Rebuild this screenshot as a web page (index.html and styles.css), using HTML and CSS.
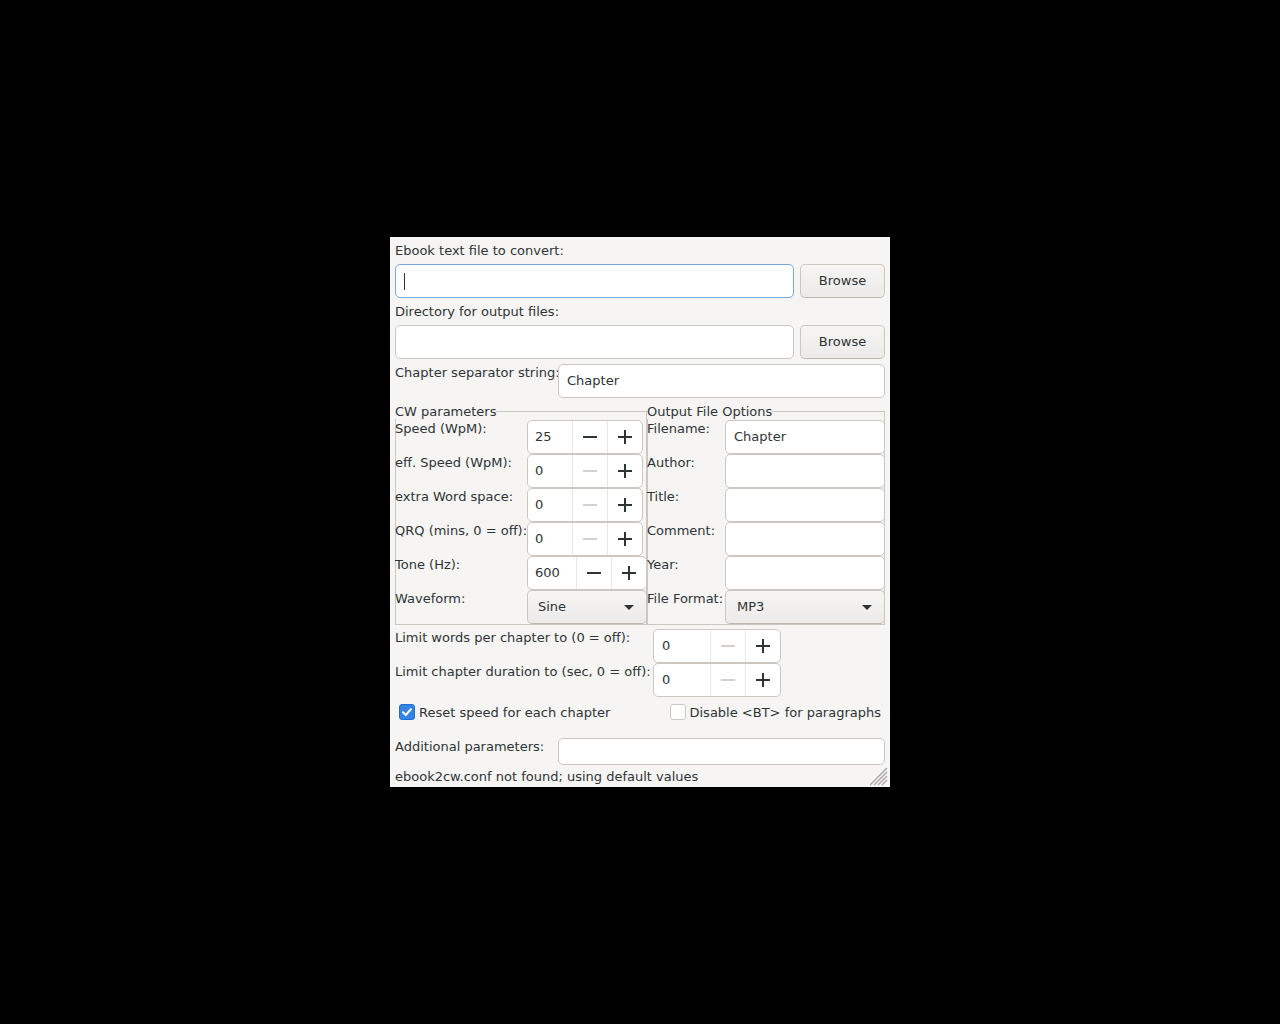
FILE: index.html
```html
<!DOCTYPE html>
<html>
<head>
<meta charset="utf-8">
<link rel="stylesheet" href="styles.css">
</head>
<body>
<div class="window">
  <div class="top-label">Ebook text file to convert:</div>
  <div class="file-row">
    <div class="entry focus"><span class="caret"></span></div>
    <div class="btn">Browse</div>
  </div>
  <div class="top-label">Directory for output files:</div>
  <div class="file-row">
    <div class="entry"></div>
    <div class="btn">Browse</div>
  </div>
  <div class="chapter-row">
    <span class="lbl">Chapter separator string:</span>
    <div class="entry">Chapter</div>
  </div>

  <div class="frames">
    <fieldset class="frame cw">
      <legend>CW parameters</legend>
      <div class="cw-grid">
        <span class="lbl in">Speed (WpM):</span>
        <div class="spin"><span class="val">25</span><span class="sb"><i class="minus"></i></span><span class="sb"><i class="plus"></i></span></div>
        <span class="lbl in">eff. Speed (WpM):</span>
        <div class="spin"><span class="val">0</span><span class="sb off"><i class="minus"></i></span><span class="sb"><i class="plus"></i></span></div>
        <span class="lbl in">extra Word space:</span>
        <div class="spin"><span class="val">0</span><span class="sb off"><i class="minus"></i></span><span class="sb"><i class="plus"></i></span></div>
        <span class="lbl in">QRQ (mins, 0 = off):</span>
        <div class="spin"><span class="val">0</span><span class="sb off"><i class="minus"></i></span><span class="sb"><i class="plus"></i></span></div>
        <span class="lbl in">Tone (Hz):</span>
        <div class="spin wide"><span class="val">600</span><span class="sb"><i class="minus"></i></span><span class="sb"><i class="plus"></i></span></div>
        <span class="lbl in">Waveform:</span>
        <div class="combo"><span>Sine</span><i class="arrow"></i></div>
      </div>
    </fieldset>
    <fieldset class="frame out">
      <legend>Output File Options</legend>
      <div class="out-grid">
        <span class="lbl in">Filename:</span>
        <div class="entry">Chapter</div>
        <span class="lbl in">Author:</span>
        <div class="entry"></div>
        <span class="lbl in">Title:</span>
        <div class="entry"></div>
        <span class="lbl in">Comment:</span>
        <div class="entry"></div>
        <span class="lbl in">Year:</span>
        <div class="entry"></div>
        <span class="lbl in">File Format:</span>
        <div class="combo fmt"><span>MP3</span><i class="arrow"></i></div>
      </div>
    </fieldset>
  </div>

  <div class="limit-grid">
    <span class="lbl">Limit words per chapter to (0 = off):</span>
    <div class="spin limit"><span class="val">0</span><span class="sb off"><i class="minus"></i></span><span class="sb"><i class="plus"></i></span></div>
    <span class="lbl">Limit chapter duration to (sec, 0 = off):</span>
    <div class="spin limit"><span class="val">0</span><span class="sb off"><i class="minus"></i></span><span class="sb"><i class="plus"></i></span></div>
  </div>

  <div class="check-row">
    <label class="check"><span class="box checked"><svg width="16" height="16" viewBox="0 0 16 16"><path d="M4 8.3 L6.8 11 L12 5.2" fill="none" stroke="#fff" stroke-width="2" stroke-linecap="round" stroke-linejoin="round"/></svg></span>Reset speed for each chapter</label>
    <label class="check"><span class="box"></span>Disable &lt;BT&gt; for paragraphs</label>
  </div>

  <div class="add-row">
    <span class="lbl">Additional parameters:</span>
    <div class="entry short"></div>
  </div>

  <div class="status">ebook2cw.conf not found; using default values</div>

  <svg class="grip" width="20" height="20" viewBox="0 0 20 20">
    <g stroke="#a7a4a1" stroke-width="1.2">
      <line x1="2" y1="19" x2="19" y2="2"/>
      <line x1="6" y1="19" x2="19" y2="6"/>
      <line x1="10" y1="19" x2="19" y2="10"/>
      <line x1="14" y1="19" x2="19" y2="14"/>
    </g>
  </svg>
</div>
</body>
</html>
```

FILE: styles.css
```css
html, body {
  margin: 0;
  padding: 0;
}
body {
  width: 1280px;
  height: 1024px;
  background: #000;
  position: relative;
  font-family: "DejaVu Sans", sans-serif;
  font-size: 13px;
  color: #2e3436;
}
.window {
  position: absolute;
  left: 390px;
  top: 237px;
  width: 500px;
  height: 550px;
  box-sizing: border-box;
  padding: 0 5px;
  background: #f6f5f4;
}
.top-label {
  height: 27px;
  line-height: 27px;
}
.lbl {
  line-height: 16px;
  padding-top: 1px;
  white-space: nowrap;
}
.lbl.in {
  margin-left: -1px;
}
.entry {
  box-sizing: border-box;
  height: 34px;
  border: 1px solid #cdc7c2;
  border-radius: 5px;
  background: #fff;
  padding: 0 8px 1px;
  display: flex;
  align-items: center;
  white-space: nowrap;
}
.entry.focus {
  border-color: #7ba7df;
  padding-bottom: 0;
}
.caret {
  width: 1px;
  height: 17px;
  background: #2e3436;
}
.file-row {
  display: grid;
  grid-template-columns: 399px 85px;
  column-gap: 6px;
}
.btn {
  box-sizing: border-box;
  height: 34px;
  padding-bottom: 1px;
  border: 1px solid #cdc7c2;
  border-bottom-color: #bfb8b1;
  border-radius: 5px;
  background: linear-gradient(#f6f5f4, #edebe9);
  display: flex;
  align-items: center;
  justify-content: center;
}
.chapter-row {
  margin-top: 5px;
  display: grid;
  grid-template-columns: 163px 327px;
}
.frames {
  margin-top: 6px;
  display: flex;
}
.frame {
  margin: 0;
  padding: 1px 0 0 0;
  border: 1px solid #cdc7c2;
  min-width: 0;
  box-sizing: border-box;
}
.frame legend {
  padding: 0;
  margin-left: -1px;
  line-height: 15px;
}
.frame.cw {
  width: 252px;
}
.frame.out {
  width: 238px;
}
.cw-grid {
  display: grid;
  grid-template-columns: 131px 120px;
  grid-auto-rows: 34px;
}
.out-grid {
  display: grid;
  grid-template-columns: 77px 160px;
  grid-auto-rows: 34px;
}
.spin {
  box-sizing: border-box;
  display: flex;
  width: 116px;
  height: 34px;
  border: 1px solid #cdc7c2;
  border-radius: 5px;
  background: #fff;
}
.spin .val {
  width: 44px;
  box-sizing: border-box;
  padding: 0 0 1px 7px;
  display: flex;
  align-items: center;
}
.spin.wide {
  width: 120px;
}
.spin.wide .val {
  width: 48px;
}
.spin.limit {
  width: 128px;
}
.spin.limit .val {
  width: 56px;
  padding-left: 8px;
}
.sb {
  box-sizing: border-box;
  width: 35px;
  border-left: 1px solid #e9e6e3;
  display: flex;
  align-items: center;
  justify-content: center;
  color: #2e3436;
}
.sb.off {
  color: #d3cfcc;
}
.minus {
  display: block;
  width: 14px;
  height: 2px;
  background: currentColor;
}
.plus {
  display: block;
  position: relative;
  width: 14px;
  height: 14px;
}
.plus::before,
.plus::after {
  content: "";
  position: absolute;
  background: currentColor;
}
.plus::before {
  left: 0;
  top: 6px;
  width: 14px;
  height: 2px;
}
.plus::after {
  left: 6px;
  top: 0;
  width: 2px;
  height: 14px;
}
.combo {
  box-sizing: border-box;
  height: 34px;
  width: 120px;
  border: 1px solid #cdc7c2;
  border-bottom-color: #bfb8b1;
  border-radius: 5px;
  background: linear-gradient(#f6f5f4, #edebe9);
  display: flex;
  align-items: center;
  justify-content: space-between;
  padding: 0 12px 1px 10px;
}
.combo.fmt {
  width: 160px;
  padding-left: 11px;
}
.arrow {
  display: block;
  width: 0;
  height: 0;
  margin-top: 1px;
  border-left: 5px solid transparent;
  border-right: 5px solid transparent;
  border-top: 5px solid #2e3436;
}
.limit-grid {
  margin-top: 4px;
  display: grid;
  grid-template-columns: 258px 128px;
  grid-auto-rows: 34px;
}
.check-row {
  height: 30px;
  margin-bottom: 11px;
  padding: 0 4px;
  display: flex;
  align-items: center;
  justify-content: space-between;
}
.check {
  display: flex;
  align-items: center;
  white-space: nowrap;
}
.box {
  box-sizing: border-box;
  width: 16px;
  height: 16px;
  margin-right: 4px;
  border: 1px solid #cdc7c2;
  border-radius: 3px;
  background: #fff;
  display: flex;
}
.box svg {
  margin: -1px;
}
.box.checked {
  background: #3584e4;
  border-color: #1f70d4;
}
.add-row {
  display: grid;
  grid-template-columns: 163px 327px;
}
.entry.short {
  height: 27px;
}
.status {
  line-height: 22px;
  padding-top: 1px;
  height: 21px;
  white-space: nowrap;
}
.grip {
  position: absolute;
  right: 2px;
  bottom: 1px;
}
```
